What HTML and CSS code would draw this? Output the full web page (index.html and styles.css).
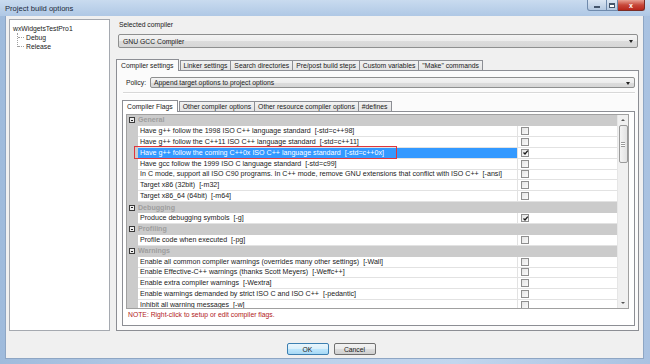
FILE: index.html
```html
<!DOCTYPE html>
<html lang="en">
<head>
    <meta charset="UTF-8">
    <title>Project build options</title>
    <link rel="stylesheet" href="styles.css">
</head>
<body>
    <div class="window">
        <div class="titlebar">
            <span class="title">Project build options</span>
            <div class="controls">
                <span class="ctl min"><i></i></span>
                <span class="ctl max"><i></i></span>
                <span class="ctl close">x</span>
            </div>
        </div>
        <div class="client">
            <div class="main">
                <div class="tree">
                    <div class="tree-root">wxWidgetsTestPro1</div>
                    <div class="tree-kids">
                        <div class="tree-item">Debug</div>
                        <div class="tree-item last">Release</div>
                    </div>
                </div>
                <div class="settings">
                    <div class="label">Selected compiler</div>
                    <div class="combo big">GNU GCC Compiler<span class="arrow"></span></div>

                    <div class="notebook outer">
                        <div class="tabs">
                            <span class="tab active">Compiler settings</span>
                            <span class="tab">Linker settings</span>
                            <span class="tab">Search directories</span>
                            <span class="tab">Pre/post build steps</span>
                            <span class="tab">Custom variables</span>
                            <span class="tab">"Make" commands</span>
                        </div>
                        <div class="panel">
                            <div class="policy">
                                <span>Policy:</span>
                                <div class="combo small">Append target options to project options<span class="arrow"></span></div>
                            </div>
                            <div class="sep"></div>

                            <div class="notebook inner">
                                <div class="tabs">
                                    <span class="tab active">Compiler Flags</span>
                                    <span class="tab">Other compiler options</span>
                                    <span class="tab">Other resource compiler options</span>
                                    <span class="tab">#defines</span>
                                </div>
                                <div class="panel">
                                    <div class="pg">
                                        <div class="pg-rows" id="rows"></div>
                                        <div class="scrollbar">
                                            <span class="sb-arrow up"></span>
                                            <span class="sb-thumb"><i></i></span>
                                            <span class="sb-track"></span>
                                            <span class="sb-arrow down"></span>
                                        </div>
                                    </div>
                                    <div class="note">NOTE: Right-click to setup or edit compiler flags.</div>
                                </div>
                            </div>
                        </div>
                    </div>
                </div>
            </div>
            <div class="buttons">
                <button class="btn default">OK</button>
                <button class="btn">Cancel</button>
            </div>
        </div>
    </div>

    <script>
        const flags = [
            { cat: "General" },
            { text: "Have g++ follow the 1998 ISO C++ language standard  [-std=c++98]" },
            { text: "Have g++ follow the C++11 ISO C++ language standard  [-std=c++11]" },
            { text: "Have g++ follow the coming C++0x ISO C++ language standard  [-std=c++0x]", on: true, sel: true },
            { text: "Have gcc follow the 1999 ISO C language standard  [-std=c99]" },
            { text: "In C mode, support all ISO C90 programs. In C++ mode, remove GNU extensions that conflict with ISO C++  [-ansi]" },
            { text: "Target x86 (32bit)  [-m32]" },
            { text: "Target x86_64 (64bit)  [-m64]" },
            { cat: "Debugging" },
            { text: "Produce debugging symbols  [-g]", on: true },
            { cat: "Profiling" },
            { text: "Profile code when executed  [-pg]" },
            { cat: "Warnings" },
            { text: "Enable all common compiler warnings (overrides many other settings)  [-Wall]" },
            { text: "Enable Effective-C++ warnings (thanks Scott Meyers)  [-Weffc++]" },
            { text: "Enable extra compiler warnings  [-Wextra]" },
            { text: "Enable warnings demanded by strict ISO C and ISO C++  [-pedantic]" },
            { text: "Inhibit all warning messages  [-w]" }
        ];

        const rowsEl = document.getElementById("rows");
        const tick = '<svg viewBox="0 0 7 7" width="7" height="7"><path d="M1.5 3.5 L3 5 L5.8 1.6" fill="none" stroke="#1a1a1a" stroke-width="1.3"/></svg>';

        for (const f of flags) {
            const row = document.createElement("div");
            if (f.cat) {
                row.className = "pg-row cat";
                row.innerHTML = '<span class="toggle"></span><span class="cat-name">' + f.cat + '</span>';
            } else {
                row.className = "pg-row" + (f.sel ? " sel" : "");
                row.innerHTML = '<span class="margin"></span>' +
                    '<span class="name"></span>' +
                    '<span class="value"><span class="check">' + (f.on ? tick : "") + '</span></span>';
                row.querySelector(".name").textContent = f.text;
                if (f.sel) {
                    const mark = document.createElement("span");
                    mark.className = "mark";
                    row.querySelector(".name").appendChild(mark);
                }
            }
            rowsEl.appendChild(row);
        }
    </script>
</body>
</html>
```

FILE: styles.css
```css
* {
    margin: 0;
    padding: 0;
    box-sizing: border-box;
}

body {
    width: 650px;
    height: 364px;
    overflow: hidden;
    font-family: "Liberation Sans", Arial, sans-serif;
    font-size: 6.8px;
    color: #1a1a1a;
}

.window {
    width: 650px;
    height: 364px;
    display: flex;
    flex-direction: column;
    background: linear-gradient(90deg, #9fbbdc, #b7cde8 30%, #c2d6ee 70%, #a9c2e1);
}

.titlebar {
    height: 16px;
    display: flex;
    align-items: center;
    justify-content: space-between;
    padding-left: 5px;
    background: linear-gradient(#c9dbef, #afc8e5);
}

.title {
    font-size: 7.6px;
    color: #1b2a3c;
}

.controls {
    display: flex;
    align-self: flex-start;
    margin-right: 5px;
}

.ctl {
    height: 11px;
    display: flex;
    align-items: center;
    justify-content: center;
    border: 1px solid #6f8aac;
    border-top: none;
    background: linear-gradient(#dbe6f3, #b4c8e0);
}

.ctl.min {
    width: 20px;
    border-radius: 0 0 0 3px;
}

.ctl.min i {
    width: 6px;
    height: 2px;
    margin-top: 3px;
    background: #fff;
    border: 1px solid #44556b;
}

.ctl.max {
    width: 11px;
    border-left: none;
}

.ctl.max i {
    width: 6px;
    height: 5px;
    border: 1px solid #44556b;
    border-top-width: 2px;
    background: #fff;
}

.ctl.close {
    width: 27px;
    border-left: none;
    border-color: #7a2c24;
    border-radius: 0 0 3px 0;
    background: linear-gradient(#e8a193, #c7483a 50%, #b8261b);
    color: #fff;
    font-size: 7px;
    font-weight: bold;
}

.client {
    flex: 1;
    margin: 0 6px 5px 5px;
    background: #f0f0f0;
    display: flex;
    flex-direction: column;
    border: 1px solid #8ea6c4;
    border-top: none;
}

.main {
    display: flex;
    gap: 6px;
    padding: 3px 4px 0 3px;
    height: 315px;
}

/* project tree */
.tree {
    width: 101px;
    background: #fff;
    border: 1px solid #a5a9b0;
    padding: 4px 0 0 3px;
    line-height: 9px;
}

.tree-kids {
    margin-left: 4px;
    border-left: 1px dotted #a0a0a0;
    height: 14px;
}

.tree-item {
    position: relative;
    padding-left: 8px;
}

.tree-item::before {
    content: '';
    position: absolute;
    left: 0;
    top: 4px;
    width: 6px;
    border-top: 1px dotted #a0a0a0;
}

.settings {
    flex: 1;
    display: flex;
    flex-direction: column;
}

.label {
    height: 15px;
    padding: 2px 0 0 3px;
}

.combo {
    position: relative;
    display: flex;
    align-items: center;
    border: 1px solid #8e8f8f;
    border-radius: 2px;
    background: linear-gradient(#f4f4f4, #ececec 50%, #dcdcdc 51%, #d6d6d6);
    padding-left: 4px;
}

.combo.big {
    height: 14px;
    margin: 0 1px 0 2px;
}

.combo.small {
    flex: 1;
    height: 11px;
    padding-left: 3px;
}

.arrow {
    position: absolute;
    right: 4px;
    top: 50%;
    margin-top: -1px;
    border: 2.5px solid transparent;
    border-top: 3px solid #222;
    border-bottom: none;
}

/* notebooks */
.notebook {
    display: flex;
    flex-direction: column;
}

.notebook.outer {
    margin-top: 10px;
    flex: 1;
}

.tabs {
    display: flex;
    align-items: flex-end;
    height: 12px;
    padding-left: 2px;
    position: relative;
    z-index: 1;
}

.tab {
    height: 10px;
    padding: 0 3px;
    line-height: 9px;
    border: 1px solid #8c8e94;
    border-bottom: none;
    margin-right: -1px;
    background: linear-gradient(#f2f2f2, #e4e4e4);
    white-space: nowrap;
}

.tab.active {
    height: 12px;
    margin: 0 0 -1px -2px;
    padding: 1px 4px 0 4px;
    background: #fbfbfb;
}

.tab.active + .tab {
    margin-left: 1px;
}

.panel {
    flex: 1;
    border: 1px solid #8c8e94;
    background: #fbfbfb;
    display: flex;
    flex-direction: column;
}

.outer > .panel {
    padding: 6px 3px 4px 4px;
}

.policy {
    display: flex;
    align-items: center;
    gap: 4px;
    padding-left: 5px;
    height: 11px;
}

.sep {
    margin: 4px 0 5px 2px;
    border-top: 1px solid #d8d8d8;
    border-bottom: 1px solid #fff;
}

.notebook.inner {
    flex: 1;
    margin-left: 1px;
}

.inner .tab.active {
    background: #fff;
}

.inner > .panel {
    background: #fff;
    padding: 2px 5px 0 3px;
}

/* property grid */
.pg {
    display: flex;
    height: 195px;
    border: 1px solid #a0a0a0;
    overflow: hidden;
    font-size: 7.1px;
}

.pg-rows {
    flex: 1;
    overflow: hidden;
}

.pg-row {
    display: grid;
    grid-template-columns: 11px 380px 1fr;
    height: 10.9px;
    line-height: 10px;
    white-space: pre;
}

.pg-row.cat {
    display: flex;
    align-items: center;
    background: #cbcbcb;
}

.toggle {
    position: relative;
    width: 6px;
    height: 6px;
    margin: 0 3px 0 2px;
    border: 1px solid #3a3a3a;
    background: #eee;
}

.toggle::after {
    content: '';
    position: absolute;
    left: 1px;
    top: 1.5px;
    width: 2px;
    border-top: 1px solid #222;
}

.cat-name {
    color: #9e9e9e;
    font-weight: bold;
}

.margin {
    background: #cbcbcb;
}

.name {
    position: relative;
    padding-left: 2px;
    border-bottom: 1px solid #e2e2e2;
    border-right: 1px solid #e2e2e2;
    overflow: visible;
}

.sel .name {
    background: #3399ff;
    color: #fff;
}

.mark {
    position: absolute;
    left: -4px;
    top: -1.5px;
    width: 263px;
    height: 12.5px;
    border: 1.5px solid #e0353c;
}

.value {
    display: flex;
    align-items: center;
    padding-left: 3px;
    border-bottom: 1px solid #e2e2e2;
}

.check {
    width: 8px;
    height: 8px;
    border: 1px solid #8f8f8f;
    background: linear-gradient(135deg, #e4e4e4, #fafafa);
    display: flex;
}

.check svg {
    margin: -0.5px;
}

.scrollbar {
    width: 11px;
    display: flex;
    flex-direction: column;
    align-items: center;
    background: #f0f0f0;
    border-left: 1px solid #e6e6e6;
}

.sb-arrow {
    height: 10px;
    width: 100%;
    display: flex;
    align-items: center;
    justify-content: center;
}

.sb-arrow::after {
    content: '';
    border: 2px solid transparent;
}

.sb-arrow.up::after {
    border-bottom: 2px solid #555;
    border-top: none;
}

.sb-arrow.down::after {
    border-top: 2px solid #555;
    border-bottom: none;
}

.sb-thumb {
    width: 9px;
    height: 38px;
    border: 1px solid #9a9a9a;
    border-radius: 2px;
    background: linear-gradient(90deg, #f4f4f4, #e2e2e2);
    display: flex;
    align-items: center;
    justify-content: center;
}

.sb-thumb i {
    width: 4px;
    height: 5px;
    border-top: 1px solid #999;
    border-bottom: 1px solid #999;
    background: linear-gradient(#fff 40%, #999 40%, #999 60%, #fff 60%);
}

.sb-track {
    flex: 1;
}

.note {
    color: #b22222;
    padding: 2px 0 0 2px;
    height: 14px;
}

/* dialog buttons */
.buttons {
    display: flex;
    justify-content: center;
    gap: 5px;
    padding-top: 12px;
    padding-left: 13px;
}

.btn {
    width: 42px;
    height: 12px;
    font-family: inherit;
    font-size: 6.8px;
    color: #1a1a1a;
    border: 1px solid #707070;
    border-radius: 2px;
    background: linear-gradient(#f2f2f2, #ebebeb 50%, #dddddd 51%, #cfcfcf);
}

.btn.default {
    border-color: #3c7fb1;
    background: linear-gradient(#e9f5fc, #d9effb 50%, #bee6fd 51%, #a7d9f5);
}
```
